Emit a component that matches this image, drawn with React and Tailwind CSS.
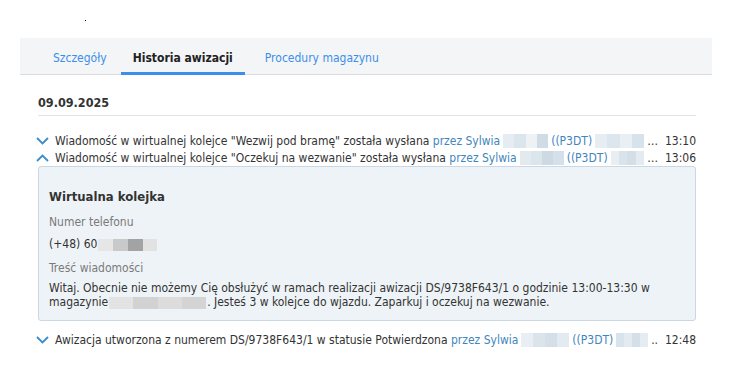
import React from 'react'

const Chevron = ({up}) => (
    <svg width="13" height="8" viewBox="0 0 13 8" className="shrink-0">
        <path d={up ? "M1 7 L6.5 1.5 L12 7" : "M1 1 L6.5 6.5 L12 1"} fill="none" stroke="#3d8bc9" strokeWidth="1.8"/>
    </svg>
)

const Blur = ({w, shades, grow}) => (
    <span className={`flex h-[14px] mx-[3px] ${grow ? 'flex-1 min-w-0' : 'shrink-0'}`} style={grow ? undefined : {width: w}}>
        {shades.map((c, i) => (
            <span key={i} className="h-full flex-1" style={{backgroundColor: c}}/>
        ))}
    </span>
)

const Row = ({up, text, blur1, blur2, dots, time}) => (
    <div className="flex items-center h-[17px] whitespace-nowrap">
        <div className="w-[19px] -ml-[2px] flex items-center shrink-0"><Chevron up={up}/></div>
        <span className="text-[#333] shrink-0">{text}&nbsp;</span>
        <span className="text-[#3f86bd] shrink-0">przez Sylwia</span>
        <Blur w={blur1.w} shades={blur1.shades}/>
        <span className="text-[#3f86bd] shrink-0">((P3DT)</span>
        <Blur grow shades={blur2}/>
        <span className="text-[#333] shrink-0">{dots}</span>
        <div className="w-[38px] text-right text-[#333] shrink-0">{time}</div>
    </div>
)

export default function App() {
    return (
        <div className="w-[732px] h-[383px] bg-white text-[12px] font-['DejaVu_Sans_Condensed','DejaVu_Sans',sans-serif]">
            {/* stray dot */}
            <div className="h-[38px] pl-[85px] pt-[20px]">
                <div className="w-[1px] h-[1px] bg-black"/>
            </div>

            {/* tabs */}
            <div className="mx-[20px] h-[37px] bg-[#f4f5f7] border-b border-[#dadcdf] flex items-stretch pl-[21px] gap-[2px] text-[12px]">
                <div className="px-[12px] pt-[4px] flex items-center text-[#3b8eea]">Szczegóły</div>
                <div className="px-[12px] pt-[5px] flex items-center font-bold text-[#222] border-b-[3px] border-[#3b8eea] -mb-px">Historia awizacji</div>
                <div className="px-[12px] pt-[4px] ml-[6px] flex items-center text-[#3b8eea]">Procedury magazynu</div>
            </div>

            <div className="pl-[38px] pr-[36px]">
                {/* date */}
                <div className="mt-[20px] pb-[4px] border-b border-[#e3e3e3] font-bold text-[12.5px] text-[#333] leading-[16px]">09.09.2025</div>

                <div className="mt-[16px]">
                    <Row text={'Wiadomość w wirtualnej kolejce "Wezwij pod bramę" została wysłana'}
                         blur1={{w: 45, shades: ['#e6edf2', '#dbe5ec', '#eef2f5', '#cfdce6']}}
                         blur2={['#e7eef3', '#dde6ed', '#e9eff3', '#d8e2ea']}
                         dots="…" time="13:10"/>
                    <Row up text={'Wiadomość w wirtualnej kolejce "Oczekuj na wezwanie" została wysłana'}
                         blur1={{w: 44, shades: ['#e2eaf0', '#dbe5ec', '#cdd9e3', '#d6e0e8']}}
                         blur2={['#e8eef3', '#dae3ea', '#d4dee6', '#e4ebf0']}
                         dots="…" time="13:06"/>
                </div>

                {/* expanded panel */}
                <div className="h-[155px] bg-[#eef3f7] border border-[#c9d8e4] rounded-[3px] px-[10px] pt-[21px] text-[#333]">
                    <div className="font-bold text-[13px] leading-[17px]">Wirtualna kolejka</div>
                    <div className="mt-[9px] text-[#7a7a7a] leading-[17px]">Numer telefonu</div>
                    <div className="mt-[5px] leading-[17px] flex items-center">
                        (+48) 60
                        <span className="inline-flex h-[12px] w-[59px] ml-[1px]">
                            <span className="flex-1 bg-[#e6e6e6]"/>
                            <span className="flex-1 bg-[#c9c9c9]"/>
                            <span className="flex-1 bg-[#a3a3a3]"/>
                            <span className="flex-1 bg-[#e2e2e2]"/>
                        </span>
                    </div>
                    <div className="mt-[7px] text-[#7a7a7a] leading-[17px]">Treść wiadomości</div>
                    <div className="mt-[4px] leading-[14px]">
                        Witaj. Obecnie nie możemy Cię obsłużyć w ramach realizacji awizacji DS/9738F643/1 o godzinie 13:00-13:30 w
                        <br/>
                        magazynie
                        <span className="inline-flex align-middle h-[12px] w-[97px] mx-[1px]">
                            <span className="flex-1 bg-[#e3e3e3]"/>
                            <span className="flex-1 bg-[#d2d2d2]"/>
                            <span className="flex-1 bg-[#dcdcdc]"/>
                            <span className="flex-1 bg-[#d4d4d4]"/>
                        </span>
                        . Jesteś 3 w kolejce do wjazdu. Zaparkuj i oczekuj na wezwanie.
                    </div>
                </div>

                <div className="mt-[10px]">
                    <Row text="Awizacja utworzona z numerem DS/9738F643/1 w statusie Potwierdzona"
                         blur1={{w: 48, shades: ['#e8eef3', '#dbe4eb', '#d5dfe7', '#e3eaf0']}}
                         blur2={['#d9e3eb', '#e4ebf0', '#d5dfe7', '#e6edf2']}
                         dots=".." time="12:48"/>
                </div>
            </div>
        </div>
    )
}
